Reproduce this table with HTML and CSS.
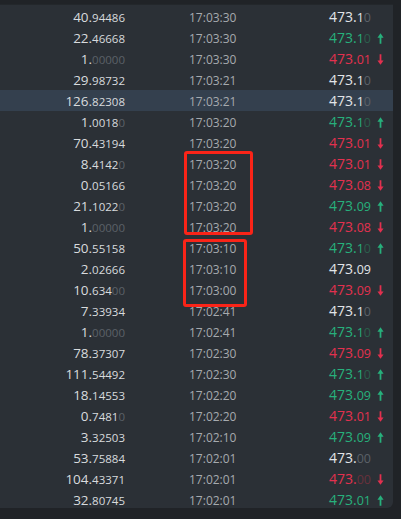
FILE: index.html
```html
<!DOCTYPE html>
<html>
<head>
<meta charset="utf-8">
<link rel="stylesheet" href="styles.css">
</head>
<body>
<div class="panel">
  <div class="row"><span class="amt"><b>40.</b>94486</span><span class="time">17:03:30</span><span class="price"><span class="p"><b>473.</b>1<i>0</i></span></span></div>
  <div class="row"><span class="amt"><b>22.</b>46668</span><span class="time">17:03:30</span><span class="price up"><span class="p"><b>473.</b>1<i>0</i></span><svg class="arr" viewBox="0 0 8 12"><path d="M4 12V3"/><path class="hd" d="M0.5 5 4 0 7.5 5Z"/></svg></span></div>
  <div class="row"><span class="amt"><b>1.</b><i>00000</i></span><span class="time">17:03:30</span><span class="price dn"><span class="p"><b>473.</b>01</span><svg class="arr" viewBox="0 0 8 12"><path d="M4 0V9"/><path class="hd" d="M0.5 7 4 12 7.5 7Z"/></svg></span></div>
  <div class="row"><span class="amt"><b>29.</b>98732</span><span class="time">17:03:21</span><span class="price"><span class="p"><b>473.</b>1<i>0</i></span></span></div>
  <div class="row sel"><span class="amt"><b>126.</b>82308</span><span class="time">17:03:21</span><span class="price"><span class="p"><b>473.</b>1<i>0</i></span></span></div>
  <div class="row"><span class="amt"><b>1.</b>0018<i>0</i></span><span class="time">17:03:20</span><span class="price up"><span class="p"><b>473.</b>1<i>0</i></span><svg class="arr" viewBox="0 0 8 12"><path d="M4 12V3"/><path class="hd" d="M0.5 5 4 0 7.5 5Z"/></svg></span></div>
  <div class="row"><span class="amt"><b>70.</b>43194</span><span class="time">17:03:20</span><span class="price dn"><span class="p"><b>473.</b>01</span><svg class="arr" viewBox="0 0 8 12"><path d="M4 0V9"/><path class="hd" d="M0.5 7 4 12 7.5 7Z"/></svg></span></div>
  <div class="row"><span class="amt"><b>8.</b>4142<i>0</i></span><span class="time">17:03:20</span><span class="price dn"><span class="p"><b>473.</b>01</span><svg class="arr" viewBox="0 0 8 12"><path d="M4 0V9"/><path class="hd" d="M0.5 7 4 12 7.5 7Z"/></svg></span></div>
  <div class="row"><span class="amt"><b>0.</b>05166</span><span class="time">17:03:20</span><span class="price dn"><span class="p"><b>473.</b>08</span><svg class="arr" viewBox="0 0 8 12"><path d="M4 0V9"/><path class="hd" d="M0.5 7 4 12 7.5 7Z"/></svg></span></div>
  <div class="row"><span class="amt"><b>21.</b>1022<i>0</i></span><span class="time">17:03:20</span><span class="price up"><span class="p"><b>473.</b>09</span><svg class="arr" viewBox="0 0 8 12"><path d="M4 12V3"/><path class="hd" d="M0.5 5 4 0 7.5 5Z"/></svg></span></div>
  <div class="row"><span class="amt"><b>1.</b><i>00000</i></span><span class="time">17:03:20</span><span class="price dn"><span class="p"><b>473.</b>08</span><svg class="arr" viewBox="0 0 8 12"><path d="M4 0V9"/><path class="hd" d="M0.5 7 4 12 7.5 7Z"/></svg></span></div>
  <div class="row"><span class="amt"><b>50.</b>55158</span><span class="time">17:03:10</span><span class="price up"><span class="p"><b>473.</b>1<i>0</i></span><svg class="arr" viewBox="0 0 8 12"><path d="M4 12V3"/><path class="hd" d="M0.5 5 4 0 7.5 5Z"/></svg></span></div>
  <div class="row"><span class="amt"><b>2.</b>02666</span><span class="time">17:03:10</span><span class="price"><span class="p"><b>473.</b>09</span></span></div>
  <div class="row"><span class="amt"><b>10.</b>634<i>00</i></span><span class="time">17:03:00</span><span class="price dn"><span class="p"><b>473.</b>09</span><svg class="arr" viewBox="0 0 8 12"><path d="M4 0V9"/><path class="hd" d="M0.5 7 4 12 7.5 7Z"/></svg></span></div>
  <div class="row"><span class="amt"><b>7.</b>33934</span><span class="time">17:02:41</span><span class="price"><span class="p"><b>473.</b>1<i>0</i></span></span></div>
  <div class="row"><span class="amt"><b>1.</b><i>00000</i></span><span class="time">17:02:41</span><span class="price up"><span class="p"><b>473.</b>1<i>0</i></span><svg class="arr" viewBox="0 0 8 12"><path d="M4 12V3"/><path class="hd" d="M0.5 5 4 0 7.5 5Z"/></svg></span></div>
  <div class="row"><span class="amt"><b>78.</b>37307</span><span class="time">17:02:30</span><span class="price dn"><span class="p"><b>473.</b>09</span><svg class="arr" viewBox="0 0 8 12"><path d="M4 0V9"/><path class="hd" d="M0.5 7 4 12 7.5 7Z"/></svg></span></div>
  <div class="row"><span class="amt"><b>111.</b>54492</span><span class="time">17:02:30</span><span class="price up"><span class="p"><b>473.</b>1<i>0</i></span><svg class="arr" viewBox="0 0 8 12"><path d="M4 12V3"/><path class="hd" d="M0.5 5 4 0 7.5 5Z"/></svg></span></div>
  <div class="row"><span class="amt"><b>18.</b>14553</span><span class="time">17:02:20</span><span class="price up"><span class="p"><b>473.</b>09</span><svg class="arr" viewBox="0 0 8 12"><path d="M4 12V3"/><path class="hd" d="M0.5 5 4 0 7.5 5Z"/></svg></span></div>
  <div class="row"><span class="amt"><b>0.</b>7481<i>0</i></span><span class="time">17:02:20</span><span class="price dn"><span class="p"><b>473.</b>01</span><svg class="arr" viewBox="0 0 8 12"><path d="M4 0V9"/><path class="hd" d="M0.5 7 4 12 7.5 7Z"/></svg></span></div>
  <div class="row"><span class="amt"><b>3.</b>32503</span><span class="time">17:02:10</span><span class="price up"><span class="p"><b>473.</b>09</span><svg class="arr" viewBox="0 0 8 12"><path d="M4 12V3"/><path class="hd" d="M0.5 5 4 0 7.5 5Z"/></svg></span></div>
  <div class="row"><span class="amt"><b>53.</b>75884</span><span class="time">17:02:01</span><span class="price"><span class="p"><b>473.</b><i>00</i></span></span></div>
  <div class="row"><span class="amt"><b>104.</b>43371</span><span class="time">17:02:01</span><span class="price dn"><span class="p"><b>473.</b><i>00</i></span><svg class="arr" viewBox="0 0 8 12"><path d="M4 0V9"/><path class="hd" d="M0.5 7 4 12 7.5 7Z"/></svg></span></div>
  <div class="row"><span class="amt"><b>32.</b>80745</span><span class="time">17:02:01</span><span class="price up"><span class="p"><b>473.</b>01</span><svg class="arr" viewBox="0 0 8 12"><path d="M4 12V3"/><path class="hd" d="M0.5 5 4 0 7.5 5Z"/></svg></span></div>
  <div class="mark mark-a"></div>
  <div class="mark mark-b"></div>
</div>
</body>
</html>
```

FILE: styles.css
```css
html, body {
  margin: 0;
  padding: 0;
  background: #202327;
}
body {
  font-family: "Open Sans", "Liberation Sans", sans-serif;
  width: 401px;
  height: 519px;
  overflow: hidden;
  padding-top: 4px;
  box-sizing: border-box;
}
.panel {
  position: relative;
  width: 393px;
  height: 504px;
  box-sizing: border-box;
  border-top: 1px solid #23272b;
  padding-top: 1px;
  background: #2b3036;
  border-bottom-right-radius: 6px;
  overflow: hidden;
}
.row {
  display: grid;
  grid-template-columns: 125px 76px 1fr;
  column-gap: 64px;
  height: 21px;
  line-height: 21px;
  align-items: baseline;
}
.row.sel {
  background: #34404e;
}
.amt {
  text-align: right;
  color: #d8dbde;
  font-size: 11.5px;
  white-space: nowrap;
}
.amt b {
  font-weight: normal;
  font-size: 13.5px;
}
i {
  font-style: normal;
  color: #5b6168;
}
.time {
  color: #a6aaae;
  font-size: 12px;
  white-space: nowrap;
}
.price {
  display: flex;
  align-items: center;
  gap: 6px;
  color: #e2e5e8;
  font-size: 12.5px;
  white-space: nowrap;
}
.price b {
  font-weight: normal;
  font-size: 14px;
}
.price.up { color: #27b07c; }
.price.dn { color: #e3304f; }
.price.up i { color: #2b5e4c; }
.price.dn i { color: #68303c; }
.arr {
  width: 7px;
  height: 11px;
  fill: none;
  stroke: currentColor;
  stroke-width: 2;
}
.arr .hd {
  fill: currentColor;
  stroke: none;
}
.mark {
  position: absolute;
  border: 3px solid #fa2418;
  border-radius: 3px;
  box-sizing: border-box;
}
.mark-a {
  left: 184px;
  top: 146px;
  width: 69px;
  height: 84px;
}
.mark-b {
  left: 183px;
  top: 234px;
  width: 64px;
  height: 68px;
}
```
